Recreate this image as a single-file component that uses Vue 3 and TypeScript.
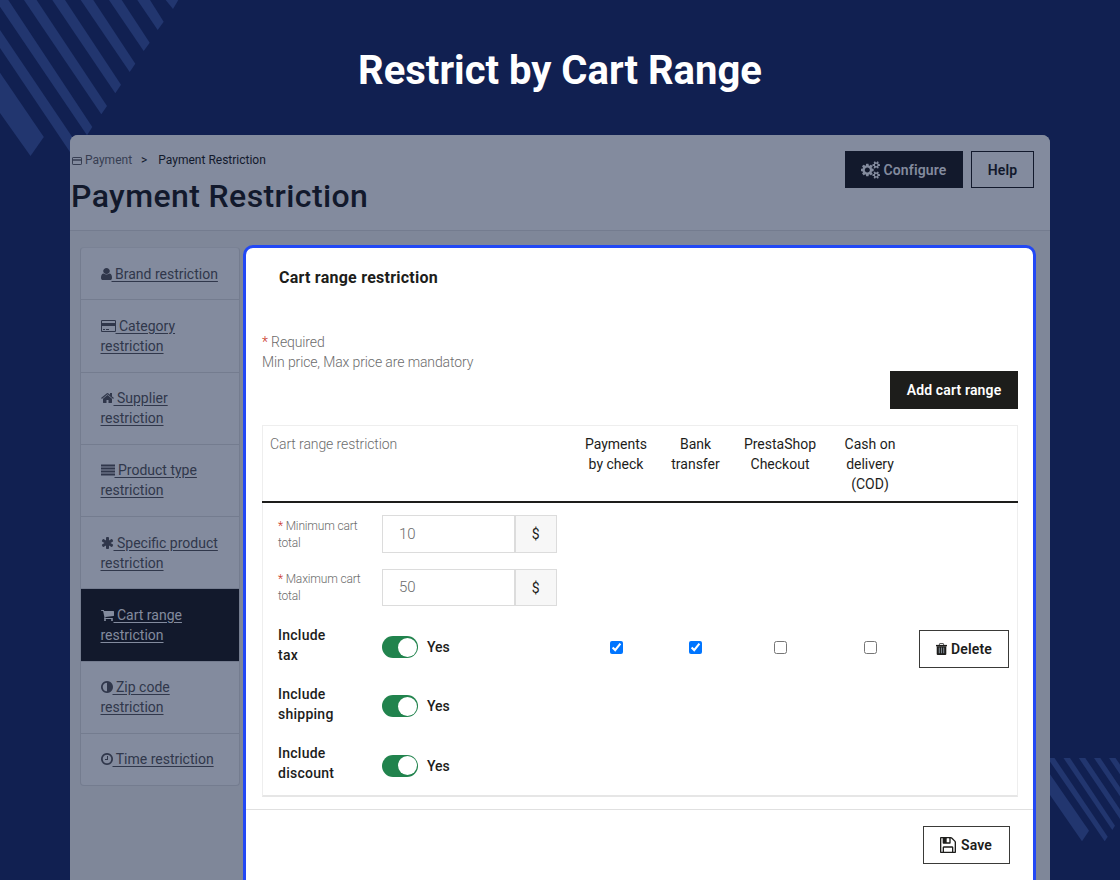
<script setup lang="ts">
import { reactive, ref } from 'vue'

const icons: Record<string, string> = {
  user: 'M1536 1399q0 109-62.5 187t-150.5 78h-854q-88 0-150.5-78t-62.5-187q0-85 8.5-160.5t31.5-152 58.5-131 94-89 134.5-34.5q131 128 313 128t313-128q76 0 134.5 34.5t94 89 58.5 131 31.5 152 8.5 160.5zm-256-887q0 159-112.5 271.5t-271.5 112.5-271.5-112.5-112.5-271.5 112.5-271.5 271.5-112.5 271.5 112.5 112.5 271.5z',
  card: 'M160 128h1600q66 0 113 47t47 113v1216q0 66-47 113t-113 47h-1600q-66 0-113-47t-47-113v-1216q0-66 47-113t113-47zm0 128q-32 0-32 32v224h1664v-224q0-32-32-32zm-32 640v608q0 32 32 32h1600q32 0 32-32v-608zm128 384h256v128h-256zm384 0h384v128h-384z',
  home: 'M1472 992v480q0 26-19 45t-45 19h-384v-384h-256v384h-384q-26 0-45-19t-19-45v-480q0-1 .5-3t.5-3l575-474 575 474q1 2 1 6zm223-69l-62 74q-8 9-21 11h-3q-13 0-21-7l-692-577-692 577q-12 8-24 7-13-2-21-11l-62-74q-8-10-7-23.5t11-21.5l719-599q32-26 76-26t76 26l244 204v-195q0-14 9-23t23-9h192q14 0 23 9t9 23v408l219 182q10 8 11 21.5t-7 23.5z',
  lines: 'M0 192h1792v256h-1792zM0 576h1792v256h-1792zM0 960h1792v256h-1792zM0 1344h1792v256h-1792z',
  asterisk: 'M1546 1050q46 26 59.5 77.5t-12.5 97.5l-64 110q-26 46-77.5 59.5t-97.5-12.5l-266-153v307q0 52-38 90t-90 38h-128q-52 0-90-38t-38-90v-307l-266 153q-46 26-97.5 12.5t-77.5-59.5l-64-110q-26-46-12.5-97.5t59.5-77.5l266-154-266-154q-46-26-59.5-77.5t12.5-97.5l64-110q26-46 77.5-59.5t97.5 12.5l266 153v-307q0-52 38-90t90-38h128q52 0 90 38t38 90v307l266-153q46-26 97.5-12.5t77.5 59.5l64 110q26 46 12.5 97.5t-59.5 77.5l-266 154z',
  cart: 'M704 1536q0 52-38 90t-90 38-90-38-38-90 38-90 90-38 90 38 38 90zm896 0q0 52-38 90t-90 38-90-38-38-90 38-90 90-38 90 38 38 90zm128-1088v512q0 24-16.5 42.5t-40.5 21.5l-1044 122q13 60 13 70 0 16-24 64h920q26 0 45 19t19 45-19 45-45 19h-1024q-26 0-45-19t-19-45q0-11 8-31.5t16-36 21.5-40 15.5-29.5l-177-823h-204q-26 0-45-19t-19-45 19-45 45-19h256q16 0 28.5 6.5t19.5 15.5 13 24.5 8 26 5.5 29.5 4.5 26h1201q26 0 45 19t19 45z',
  adjust: 'M896 1440v-1088q-148 0-273 73t-198 198-73 273 73 273 198 198 273 73zm768-544q0 209-103 385.5t-279.5 279.5-385.5 103-385.5-103-279.5-279.5-103-385.5 103-385.5 279.5-279.5 385.5-103 385.5 103 279.5 279.5 103 385.5z',
  clock: 'M1024 544v448q0 14-9 23t-23 9h-320q-14 0-23-9t-9-23v-64q0-14 9-23t23-9h224v-352q0-14 9-23t23-9h64q14 0 23 9t9 23zm416 352q0-148-73-273t-198-198-273-73-273 73-198 198-73 273 73 273 198 198 273 73 273-73 198-198 73-273zm224 0q0 209-103 385.5t-279.5 279.5-385.5 103-385.5-103-279.5-279.5-103-385.5 103-385.5 279.5-279.5 385.5-103 385.5 103 279.5 279.5 103 385.5z',
  floppy: 'M512 1536h768v-384h-768v384zm896 0h128v-896q0-14-10-38.5t-20-34.5l-281-281q-10-10-34-20t-39-10v416q0 40-28 68t-68 28h-576q-40 0-68-28t-28-68v-416h-128v1280h128v-416q0-40 28-68t68-28h832q40 0 68 28t28 68v416zm-384-928v-320q0-13-9.5-22.5t-22.5-9.5h-192q-13 0-22.5 9.5t-9.5 22.5v320q0 13 9.5 22.5t22.5 9.5h192q13 0 22.5-9.5t9.5-22.5zm640 32v928q0 40-28 68t-68 28h-1344q-40 0-68-28t-28-68v-1344q0-40 28-68t68-28h928q40 0 88 20t76 48l280 280q28 28 48 76t20 88z',
  cogs: 'M896 896q0-106-75-181t-181-75-181 75-75 181 75 181 181 75 181-75 75-181zm768 512q0-52-38-90t-90-38-90 38-38 90q0 53 37.5 90.5t90.5 37.5 90.5-37.5 37.5-90.5zm0-1024q0-52-38-90t-90-38-90 38-38 90q0 53 37.5 90.5t90.5 37.5 90.5-37.5 37.5-90.5zm-384 421v185q0 10-7 19.5t-16 10.5l-155 24q-11 35-32 76 34 48 90 115 7 11 7 20 0 12-7 19-23 30-82.5 89.5t-78.5 59.5q-11 0-21-7l-115-90q-37 19-77 31-11 108-23 155-7 24-30 24h-186q-11 0-20-7.5t-10-17.5l-23-153q-34-10-75-31l-118 89q-7 7-20 7-11 0-21-8-144-133-144-160 0-9 7-19 10-14 41-53t47-61q-23-44-35-82l-152-24q-10-1-17-9.5t-7-19.5v-185q0-10 7-19.5t16-10.5l155-24q11-35 32-76-34-48-90-115-7-11-7-20 0-12 7-20 22-30 82-89t79-59q11 0 21 7l115 90q34-18 77-32 11-108 23-154 7-24 30-24h186q11 0 20 7.5t10 17.5l23 153q34 10 75 31l118-89q8-7 20-7 11 0 21 8 144 133 144 160 0 8-7 19-12 16-42 54t-45 60q23 48 34 82l152 23q10 2 17 10.5t7 19.5zm640 533v140q0 16-149 31-12 27-30 52 51 113 51 138 0 4-4 7-122 71-124 71-8 0-46-47t-52-68q-20 2-30 2t-30-2q-14 21-52 68t-46 47q-2 0-124-71-4-3-4-7 0-25 51-138-18-25-30-52-149-15-149-31v-140q0-16 149-31 13-29 30-52-51-113-51-138 0-4 4-7 4-2 35-20t59-34 30-16q8 0 46 46.5t52 67.5q20-2 30-2t30 2q51-71 92-112l6-2q4 0 124 70 4 3 4 7 0 25-51 138 17 23 30 52 149 15 149 31zm0-1024v140q0 16-149 31-12 27-30 52 51 113 51 138 0 4-4 7-122 71-124 71-8 0-46-47t-52-68q-20 2-30 2t-30-2q-14 21-52 68t-46 47q-2 0-124-71-4-3-4-7 0-25 51-138-18-25-30-52-149-15-149-31v-140q0-16 149-31 13-29 30-52-51-113-51-138 0-4 4-7 4-2 35-20t59-34 30-16q8 0 46 46.5t52 67.5q20-2 30-2t30 2q51-71 92-112l6-2q4 0 124 70 4 3 4 7 0 25-51 138 17 23 30 52 149 15 149 31z'
}

const menu = [
  { icon: 'user', box: '256 0 1280 1792', w: 11, label: ' Brand restriction' },
  { icon: 'card', box: '0 0 1920 1792', w: 15, label: ' Category\nrestriction' },
  { icon: 'home', box: '64 0 1664 1792', w: 13, label: ' Supplier\nrestriction' },
  { icon: 'lines', box: '0 0 1792 1792', w: 14, label: ' Product type\nrestriction' },
  { icon: 'asterisk', box: '64 0 1664 1792', w: 13, label: ' Specific product\nrestriction' },
  { icon: 'cart', box: '64 0 1664 1792', w: 13, label: ' Cart range\nrestriction' },
  { icon: 'adjust', box: '128 0 1536 1792', w: 12, label: ' Zip code\nrestriction' },
  { icon: 'clock', box: '128 0 1536 1792', w: 12, label: ' Time restriction' }
]
const activeIndex = ref(5)

const payments = reactive([
  { name: 'Payments\nby check', checked: true },
  { name: 'Bank\ntransfer', checked: true },
  { name: 'PrestaShop\nCheckout', checked: false },
  { name: 'Cash on\ndelivery\n(COD)', checked: false }
])

const amounts = reactive([
  { label: ['Minimum cart', 'total'], value: '10' },
  { label: ['Maximum cart', 'total'], value: '50' }
])

const switches = reactive([
  { label: 'Include\ntax', on: true },
  { label: 'Include\nshipping', on: true },
  { label: 'Include\ndiscount', on: true }
])
</script>

<template>
  <div class="stage">
    <svg class="stripes" width="1120" height="880" viewBox="0 0 1120 880">
      <g fill="#22366f">
        <path d="M0 72.7L43.8 137 30.5 156 0 113z" />
        <path d="M0 30L79 147 73 156.4 0 48z" />
        <path d="M-4.5 0H8.3L92.3 127 87 135.3z" />
        <path d="M24 0H36.6L107 106 101.3 114.3z" />
        <path d="M52.3 0H65L121 84.7 115.3 93.3z" />
        <path d="M80.7 0H93.3L135.3 63.7 129.7 72z" />
        <path d="M109 0H121.7L149.7 42.7 143.7 51z" />
        <path d="M137.3 0H150L163.7 21.7 157.7 30z" />
        <path d="M165.7 0H178.3L173 9z" />
        <path d="M1050 774.3L1089 830.7 1082 841.3 1050 795z" />
        <path d="M1047.5 758H1054.5L1107.7 836.7 1104.7 841.3z" />
        <path d="M1063.5 758H1070L1115 825.7 1112.3 830z" />
        <path d="M1078.8 758H1085.3L1123 814 1120 819z" />
        <path d="M1094 758H1100.3L1130 802V811z" />
        <path d="M1109 758H1115.5L1130 779V789z" />
      </g>
    </svg>
    <h1 class="title">Restrict by Cart Range</h1>

    <div class="screen">
      <header class="header">
        <div>
          <div class="crumbs">
            <svg class="crumbIcon" width="10" height="8" viewBox="0 0 10 8">
              <rect x=".5" y=".5" width="9" height="7" rx=".6" fill="none" stroke="currentColor" />
              <path d="M0 3h10" stroke="currentColor" stroke-width="1.3" />
            </svg>
            <span class="crumb">Payment</span>
            <span class="sep">&gt;</span>
            <span>Payment Restriction</span>
          </div>
          <h2 class="pageTitle">Payment Restriction</h2>
        </div>
        <div class="actions">
          <button class="btn configure">
            <svg width="19" height="18" viewBox="0 0 1920 1792"><path :d="icons.cogs" /></svg>
            Configure
          </button>
          <button class="btn help">Help</button>
        </div>
      </header>

      <div class="content">
        <nav class="menu">
          <a v-for="(item, index) in menu" :key="index" class="menuItem" :class="index == activeIndex ? 'active' : ''"
            @click="activeIndex = index"><svg :width="item.w" height="14" :viewBox="item.box"
              preserveAspectRatio="none"><path :d="icons[item.icon]" fill-rule="evenodd" /></svg><span>{{ item.label }}</span></a>
        </nav>

        <section class="card">
          <h3 class="cardTitle">Cart range restriction</h3>
          <div class="cardBody">
            <div class="hint"><i>*</i> Required</div>
            <div class="hint">Min price, Max price are mandatory</div>
            <button class="btn add">Add cart range</button>

            <div class="table">
              <div class="row head">
                <div class="first">Cart range restriction</div>
                <div v-for="(item, index) in payments" :key="index" class="cell">{{ item.name }}</div>
                <div></div>
              </div>
              <div class="row body">
                <div class="form">
                  <div v-for="(item, index) in amounts" :key="index" class="amount">
                    <label class="amountLabel">
                      <div><i>*</i> <span>{{ item.label[0] }}</span></div>
                      <div>{{ item.label[1] }}</div>
                    </label>
                    <div class="group">
                      <input v-model="item.value" type="text" class="input" />
                      <span class="addon">$</span>
                    </div>
                  </div>
                  <div v-for="(item, index) in switches" :key="index" class="switchRow">
                    <label class="switchLabel">{{ item.label }}</label>
                    <span class="switch" :class="item.on ? 'on' : ''" @click="item.on = !item.on"></span>
                    <span class="yes">{{ item.on ? 'Yes' : 'No' }}</span>
                  </div>
                </div>
                <div v-for="(item, index) in payments" :key="index" class="check">
                  <input v-model="item.checked" type="checkbox" />
                </div>
                <div>
                  <button class="btn delete">
                    <svg width="11" height="12" viewBox="0 0 11 12">
                      <path d="M3.4 2V1q0-.5.5-.5h3.2q.5 0 .5.5v1" fill="none" stroke="#5c5c5c" />
                      <path d="M0 1.9h11v1.4H0z" />
                      <path d="M.7 3.3h9.6V11q0 1-1 1H1.7q-1 0-1-1z" />
                      <path d="M3.3 4.6v5.6M5.5 4.6v5.6M7.7 4.6v5.6" stroke="#7b868f" stroke-width="1.1" />
                    </svg>
                    Delete
                  </button>
                </div>
              </div>
            </div>
          </div>
          <footer class="footer">
            <button class="btn save">
              <svg width="16" height="16" viewBox="128 128 1536 1536"><path :d="icons.floppy" /></svg>
              Save
            </button>
          </footer>
        </section>
      </div>
    </div>
  </div>
</template>

<style>
body {
  margin: 0;
}
</style>

<style scoped>
.stage {
  position: relative;
  width: 1120px;
  height: 880px;
  overflow: hidden;
  background: #112051;
  color: #1d1d1b;
  font-family: Roboto, "Open Sans", sans-serif;
  font-size: 14px;
  line-height: 20px;
}

.stage * {
  box-sizing: border-box;
}

.stripes {
  position: absolute;
  left: 0;
  top: 0;
}

svg {
  fill: currentColor;
}

.title {
  position: relative;
  margin: 0;
  height: 135px;
  padding-top: 47px;
  color: #fff;
  font-size: 40px;
  font-weight: 700;
  line-height: 48px;
  text-align: center;
}

.screen {
  position: relative;
  width: 980px;
  height: 745px;
  margin: 0 auto;
  border-radius: 8px 8px 0 0;
  overflow: hidden;
  background: #7f8799;
}

.header {
  display: flex;
  justify-content: space-between;
  height: 96px;
  padding: 16px 16px 0 1px;
  border-bottom: 1px solid #747c8f;
  background: #838b9e;
}

.crumbs {
  display: flex;
  align-items: center;
  height: 18px;
  font-size: 12px;
  color: #12192c;
}

.crumbIcon {
  margin: 1px 3px 0 1px;
  color: #373e52;
}

.crumb {
  color: #373e52;
}

.sep {
  margin: 0 11px 0 9px;
}

.pageTitle {
  margin: 8px 0 0;
  color: #12192c;
  font-size: 32px;
  font-weight: 500;
  line-height: 38px;
  letter-spacing: .4px;
}

.actions {
  display: flex;
  gap: 8px;
}

.btn {
  display: flex;
  align-items: center;
  justify-content: center;
  height: 37.5px;
  padding: 0;
  border: 1px solid #3a3a38;
  background: #fff;
  color: #1d1d1b;
  font-family: inherit;
  font-size: 14px;
  font-weight: 600;
  letter-spacing: .15px;
}

.configure {
  width: 118px;
  height: 37px;
  gap: 3px;
  border-color: #12192c;
  background: #12192c;
  color: #838b9e;
}

.help {
  width: 63px;
  height: 37px;
  border-color: #12192c;
  background: transparent;
  color: #12192c;
}

.content {
  display: flex;
  align-items: flex-start;
  padding: 14px 0 0 10px;
}

.menu {
  width: 160px;
  margin: 2px 3px 0 0;
  border: 1px solid #747c8f;
  border-top-color: #7a8295;
  border-radius: 4px;
  background: #838b9e;
}

.menuItem {
  display: block;
  padding: 15.5px 0 15.75px 19.5px;
  border-bottom: 1px solid #747c8f;
  color: #30374b;
  white-space: pre;
  cursor: pointer;
}

.menuItem:last-child {
  border-bottom: 0;
}

.menuItem svg {
  vertical-align: -2px;
}

.menuItem span {
  text-decoration: underline;
  text-underline-offset: 2px;
  letter-spacing: 0;
}

.menuItem.active {
  background: #12192c;
  color: #838b9e;
}

.card {
  width: 793px;
  height: 660px;
  border: 3px solid #2248f5;
  border-radius: 10px;
  background: #fff;
}

.cardTitle {
  margin: 0;
  padding: 20px 0 0 33px;
  font-size: 16px;
  font-weight: 700;
  line-height: 20px;
  letter-spacing: .24px;
}

.cardBody {
  height: 522px;
  padding: 44px 15px 0 16px;
  border-bottom: 1px solid #e0e0e0;
}

i {
  color: #c9301c;
  font-style: normal;
}

.hint {
  color: #6c6c6c;
  font-weight: 300;
  letter-spacing: -.12px;
}

.add {
  width: 128px;
  margin: -1px 0 16.5px auto;
  border-color: #1d1d1b;
  background: #1d1d1b;
  color: #fff;
}

.table {
  width: 756px;
  height: 372px;
  border: 1px solid #eee;
  border-bottom: 2px solid #e6e6e6;
}

.row {
  display: grid;
  grid-template-columns: 314px 78px 81px 88px 92px 101px;
}

.head {
  height: 77px;
  margin: 0 -1px;
  padding: 7.5px 1px 0;
  border-bottom: 2px solid #1d1d1b;
}

.first {
  padding-left: 7px;
  color: #6c6c6c;
  font-weight: 300;
  letter-spacing: -.1px;
}

.cell {
  text-align: center;
  white-space: pre;
}

.body {
  height: 293px;
}

.form {
  padding: 12px 0 0 15px;
}

.amount {
  display: flex;
  height: 53.5px;
}

.amountLabel {
  width: 104px;
  padding-top: 2.5px;
  color: #6c6c6c;
  font-size: 12px;
  font-weight: 300;
  line-height: 17px;
  letter-spacing: -.18px;
}

.group {
  display: flex;
  width: 174.5px;
  height: 37.5px;
  border: 1px solid #dcdcdc;
}

.input {
  width: 133px;
  padding: 0 16px;
  border: 0;
  border-right: 2px solid #dcdcdc;
  outline: 0;
  color: #6c6c6c;
  font-family: inherit;
  font-size: 15px;
  font-weight: 300;
}

.addon {
  flex: 1;
  background: #f7f7f7;
  line-height: 36px;
  text-align: center;
}

.switchRow {
  display: flex;
  align-items: center;
  height: 40px;
  margin: 2.5px 0 19.3px;
  font-weight: 500;
}

.switchRow + .switchRow {
  margin-top: 0;
}

.switchLabel {
  width: 104px;
  white-space: pre;
  letter-spacing: .25px;
}

.switch {
  position: relative;
  width: 36px;
  height: 22px;
  margin: 5px 9px 0 0;
  border-radius: 11px;
  background: #b3b3b3;
}

.switch::after {
  content: '';
  position: absolute;
  top: 1.5px;
  left: 1.5px;
  width: 19px;
  height: 19px;
  border-radius: 50%;
  background: #fff;
}

.switch.on {
  background: #21834d;
}

.switch.on::after {
  left: 15.5px;
}

.yes {
  margin-top: 5px;
}

.check {
  display: flex;
  justify-content: center;
  padding-top: 138px;
}

.check input {
  width: 13px;
  height: 13px;
  margin: 0;
}

.delete {
  width: 90px;
  gap: 4px;
  margin: 127px 0 0 3px;
}

.footer {
  padding: 16px 23.5px;
}

.save {
  width: 87px;
  gap: 5px;
  margin-left: auto;
}
</style>
